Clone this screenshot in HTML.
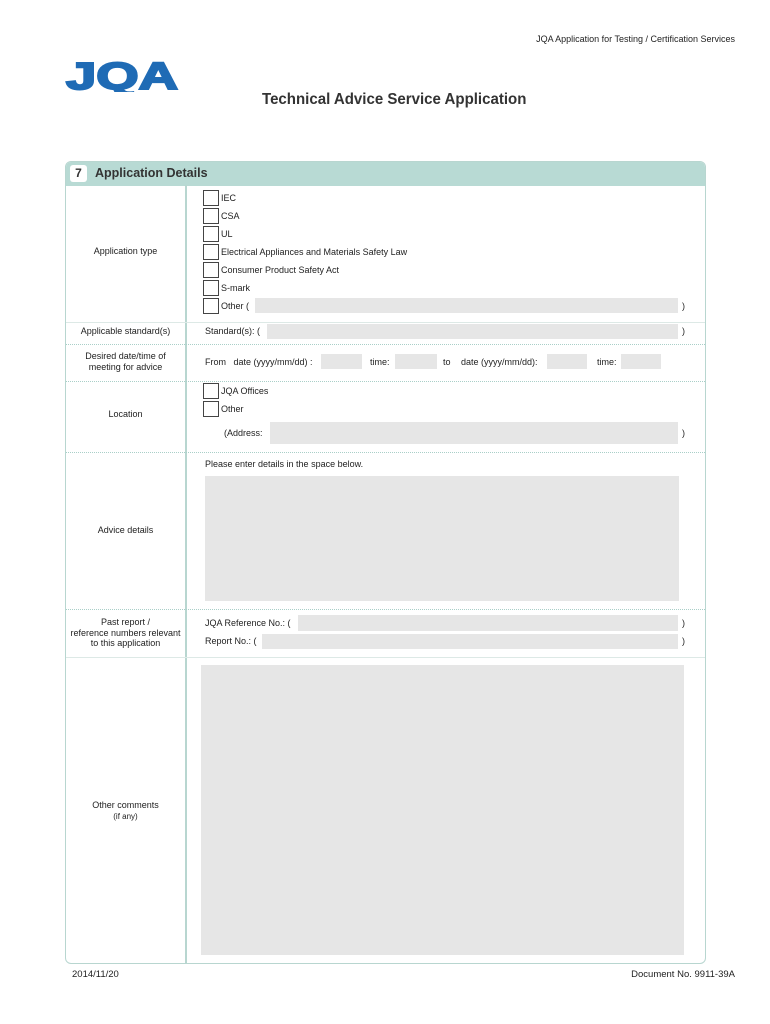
<!DOCTYPE html>
<html><head><meta charset="utf-8">
<style>
*{margin:0;padding:0;box-sizing:border-box}
body{width:770px;height:1024px;background:#fff;position:relative;font-family:"Liberation Sans",Arial,sans-serif;color:#222;overflow:hidden}
.a{position:absolute;white-space:nowrap}
.t{font-size:9px;line-height:11px}
.f{position:absolute;background:#e6e6e6}
.cb{position:absolute;width:16px;height:16px;border:1.5px solid #444;background:#fff}
.hl{position:absolute;left:66px;width:639px;border-top:1px dotted #a9cfc8}
.lc{position:absolute;left:66px;width:119px;text-align:center;font-size:9px;line-height:11px}
</style></head><body>
<div class="a t" style="right:35px;top:34px">JQA Application for Testing / Certification Services</div>
<svg class="a" style="left:64px;top:58px" width="118" height="34"><text x="2" y="31" textLength="112" lengthAdjust="spacingAndGlyphs" font-family="Liberation Sans" font-weight="bold" font-size="38" fill="#1f6bb5" stroke="#1f6bb5" stroke-width="2">JQA</text></svg>
<div class="a" style="left:262px;top:91px;font-size:16px;font-weight:bold;color:#333;transform:scaleX(0.94);transform-origin:left top;letter-spacing:0">Technical Advice Service Application</div>

<div class="a" style="left:65px;top:161px;width:641px;height:803px;border:1.5px solid #b8d6d0;border-radius:6px;overflow:hidden">
  <div style="position:absolute;left:0;top:0;right:0;height:24px;background:#b8dad4"></div>
</div>
<div class="a" style="left:70px;top:165px;width:17px;height:17px;background:#fff;border-radius:3px;font-size:12px;font-weight:bold;text-align:center;line-height:17px;color:#333">7</div>
<div class="a" style="left:95px;top:166px;font-size:12.5px;font-weight:bold;color:#333">Application Details</div>
<div class="a" style="left:185px;top:185px;width:1.5px;height:778px;background:#b8d6d0"></div>

<div class="cb" style="left:203px;top:190px"></div><div class="a t" style="left:221px;top:193px">IEC</div>
<div class="cb" style="left:203px;top:208px"></div><div class="a t" style="left:221px;top:211px">CSA</div>
<div class="cb" style="left:203px;top:226px"></div><div class="a t" style="left:221px;top:229px">UL</div>
<div class="cb" style="left:203px;top:244px"></div><div class="a t" style="left:221px;top:247px">Electrical Appliances and Materials Safety Law</div>
<div class="cb" style="left:203px;top:262px"></div><div class="a t" style="left:221px;top:265px">Consumer Product Safety Act</div>
<div class="cb" style="left:203px;top:280px"></div><div class="a t" style="left:221px;top:283px">S-mark</div>
<div class="cb" style="left:203px;top:298px"></div><div class="a t" style="left:221px;top:301px">Other (</div>
<div class="f" style="left:255px;top:298px;width:423px;height:15px"></div><div class="a t" style="left:682px;top:301px">)</div>
<div class="lc" style="top:246px">Application type</div>

<div class="hl" style="top:322px;border-top:1px solid #dde9e6"></div>
<div class="lc" style="top:326px">Applicable standard(s)</div>
<div class="a t" style="left:205px;top:326px">Standard(s): (</div>
<div class="f" style="left:267px;top:324px;width:411px;height:15px"></div><div class="a t" style="left:682px;top:326px">)</div>

<div class="hl" style="top:344px"></div>
<div class="lc" style="top:351px">Desired date/time of<br>meeting for advice</div>
<div class="a t" style="left:205px;top:357px">From&nbsp;&nbsp; date (yyyy/mm/dd) :</div>
<div class="f" style="left:321px;top:354px;width:41px;height:15px"></div>
<div class="a t" style="left:370px;top:357px">time:</div>
<div class="f" style="left:395px;top:354px;width:42px;height:15px"></div>
<div class="a t" style="left:443px;top:357px">to</div>
<div class="a t" style="left:461px;top:357px">date (yyyy/mm/dd):</div>
<div class="f" style="left:547px;top:354px;width:40px;height:15px"></div>
<div class="a t" style="left:597px;top:357px">time:</div>
<div class="f" style="left:621px;top:354px;width:40px;height:15px"></div>

<div class="hl" style="top:381px"></div>
<div class="cb" style="left:203px;top:383px"></div><div class="a t" style="left:221px;top:386px">JQA Offices</div>
<div class="cb" style="left:203px;top:401px"></div><div class="a t" style="left:221px;top:404px">Other</div>
<div class="lc" style="top:409px">Location</div>
<div class="a t" style="left:224px;top:428px">(Address:</div>
<div class="f" style="left:270px;top:422px;width:408px;height:22px"></div><div class="a t" style="left:682px;top:428px">)</div>

<div class="hl" style="top:452px"></div>
<div class="a t" style="left:205px;top:459px">Please enter details in the space below.</div>
<div class="f" style="left:205px;top:476px;width:474px;height:125px"></div>
<div class="lc" style="top:525px">Advice details</div>

<div class="hl" style="top:609px"></div>
<div class="lc" style="top:617px;line-height:10.5px">Past report /<br>reference numbers relevant<br>to this application</div>
<div class="a t" style="left:205px;top:618px">JQA Reference No.: (</div>
<div class="f" style="left:298px;top:615px;width:380px;height:16px"></div><div class="a t" style="left:682px;top:618px">)</div>
<div class="a t" style="left:205px;top:636px">Report No.: (</div>
<div class="f" style="left:262px;top:634px;width:416px;height:15px"></div><div class="a t" style="left:682px;top:636px">)</div>

<div class="hl" style="top:657px;border-top:1px solid #dde9e6"></div>
<div class="f" style="left:201px;top:665px;width:483px;height:290px"></div>
<div class="lc" style="top:800px">Other comments</div>
<div class="lc" style="top:811px;font-size:8px">(if any)</div>

<div class="a t" style="left:72px;top:969px;font-size:9.5px">2014/11/20</div>
<div class="a t" style="right:35px;top:969px;font-size:9.5px">Document No. 9911-39A</div>
</body></html>
